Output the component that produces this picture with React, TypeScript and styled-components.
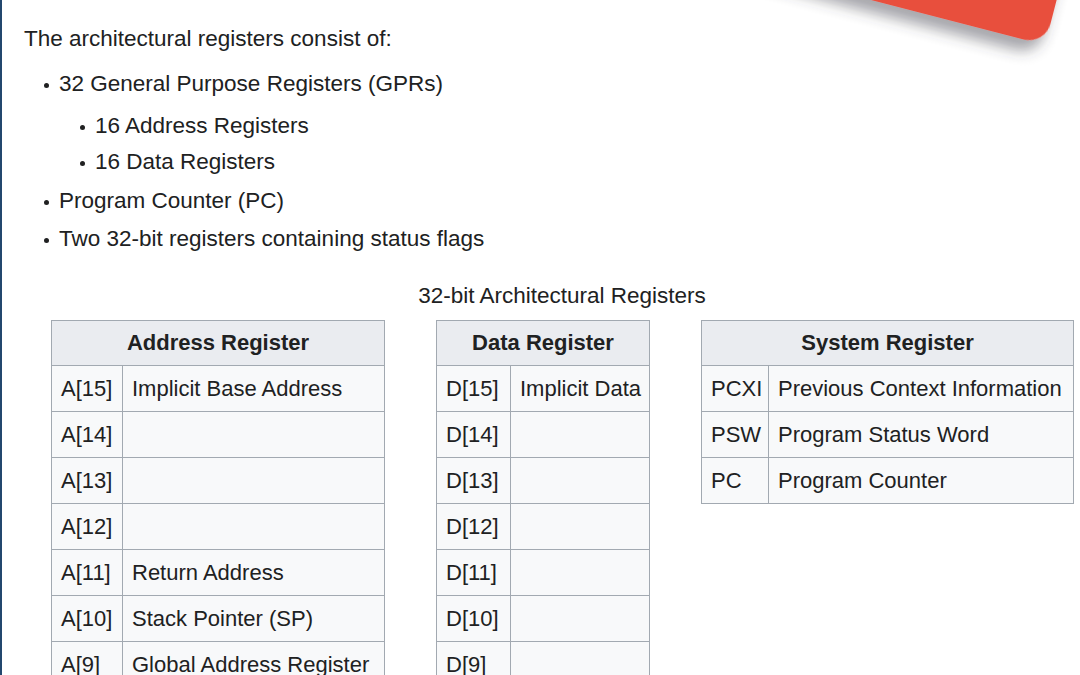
import React from "react";
import styled, { createGlobalStyle } from "styled-components";

const GlobalStyle = createGlobalStyle`
  html, body {
    margin: 0;
    padding: 0;
    background: #ffffff;
    overflow: hidden;
  }
`;

type Reg = [string, string];

const addressRegs: Reg[] = [
  ["A[15]", "Implicit Base Address"],
  ["A[14]", ""],
  ["A[13]", ""],
  ["A[12]", ""],
  ["A[11]", "Return Address"],
  ["A[10]", "Stack Pointer (SP)"],
  ["A[9]", "Global Address Register"],
  ["A[8]", "Global Address Register"],
  ["A[7]", ""],
];

const dataRegs: Reg[] = [
  ["D[15]", "Implicit Data"],
  ["D[14]", ""],
  ["D[13]", ""],
  ["D[12]", ""],
  ["D[11]", ""],
  ["D[10]", ""],
  ["D[9]", ""],
  ["D[8]", ""],
  ["D[7]", ""],
];

const systemRegs: Reg[] = [
  ["PCXI", "Previous Context Information"],
  ["PSW", "Program Status Word"],
  ["PC", "Program Counter"],
];

const RegisterTable: React.FC<{
  title: string;
  rows: Reg[];
  nameWidth: number;
  descWidth: number;
}> = ({ title, rows, nameWidth, descWidth }) => (
  <Table $width={nameWidth + descWidth}>
    <colgroup>
      <col style={{ width: nameWidth }} />
      <col style={{ width: descWidth }} />
    </colgroup>
    <thead>
      <tr>
        <Th colSpan={2}>{title}</Th>
      </tr>
    </thead>
    <tbody>
      {rows.map(([name, desc]) => (
        <tr key={name}>
          <Td>{name}</Td>
          <Td>{desc}</Td>
        </tr>
      ))}
    </tbody>
  </Table>
);

const App: React.FC = () => {
  return (
    <Page>
      <GlobalStyle />
      <Ribbon viewBox="700 0 380 110" width={380} height={110}>
        <defs>
          <filter id="ribbonShadow" x="-20%" y="-50%" width="140%" height="200%">
            <feDropShadow dx="-4" dy="12" stdDeviation="7" floodColor="#3a3845" floodOpacity="0.45" />
          </filter>
        </defs>
        <rect
          x={645}
          y={-155}
          width={400}
          height={200}
          rx={22}
          fill="#e84f3d"
          filter="url(#ribbonShadow)"
          transform="rotate(14.5 1045 45)"
        />
      </Ribbon>

      <Intro>The architectural registers consist of:</Intro>
      <List>
        <Item>
          <span>32 General Purpose Registers (GPRs)</span>
        </Item>
        <SubList>
          <Item $sub>
            <span>16 Address Registers</span>
          </Item>
          <Item $sub>
            <span>16 Data Registers</span>
          </Item>
        </SubList>
        <Item>
          <span>Program Counter (PC)</span>
        </Item>
        <Item>
          <span>Two 32-bit registers containing status flags</span>
        </Item>
      </List>

      <Figure>
        <Caption>32-bit Architectural Registers</Caption>
        <TableRow>
          <RegisterTable title="Address Register" rows={addressRegs} nameWidth={71} descWidth={262} />
          <RegisterTable title="Data Register" rows={dataRegs} nameWidth={74} descWidth={139} />
          <RegisterTable title="System Register" rows={systemRegs} nameWidth={67} descWidth={305} />
        </TableRow>
      </Figure>
    </Page>
  );
};

export default App;

// Styled Components
const Page = styled.div`
  position: relative;
  height: 675px;
  box-sizing: border-box;
  border-left: 2px solid #23476e;
  padding: 23px 0 0 22px;
  font-family: "Liberation Sans", Arial, sans-serif;
  font-size: 22.5px;
  color: #202122;
  overflow: hidden;
`;

const Ribbon = styled.svg`
  position: absolute;
  top: 0;
  right: 0;
`;

const Intro = styled.p`
  margin: 0 0 11px;
  line-height: 32px;
`;

const List = styled.ul`
  list-style: none;
  margin: 0;
  padding: 0 0 0 20px;
`;

const SubList = styled.ul`
  list-style: none;
  margin: 7px 0 4px;
  padding: 0 0 0 36px;
`;

const Item = styled.li<{ $sub?: boolean }>`
  display: flex;
  align-items: center;
  gap: 10px;
  line-height: ${(p) => (p.$sub ? "34px" : "36px")};
  margin-bottom: 2px;

  &::before {
    content: "";
    flex: none;
    width: 5px;
    height: 5px;
    border-radius: 50%;
    background: #202122;
    margin-top: 2px;
  }
`;

const Figure = styled.div`
  margin: 25px 0 0 27px;
  width: 1022px;
`;

const Caption = styled.div`
  text-align: center;
  line-height: 28px;
  margin-bottom: 10px;
`;

const TableRow = styled.div`
  display: flex;
  align-items: flex-start;
  gap: 51px;
`;

const Table = styled.table<{ $width: number }>`
  width: ${(p) => p.$width}px;
  flex: none;
  border-collapse: collapse;
  table-layout: fixed;
  background: #f8f9fa;
  color: #202122;
  font-size: 22px;
`;

const Th = styled.th`
  background: #eaecf0;
  border: 1px solid #a2a9b1;
  height: 45px;
  padding: 0 10px;
  font-weight: bold;
  text-align: center;
  box-sizing: border-box;
`;

const Td = styled.td`
  border: 1px solid #a2a9b1;
  height: 46px;
  padding: 0 9px;
  text-align: left;
  white-space: nowrap;
  box-sizing: border-box;
`;
